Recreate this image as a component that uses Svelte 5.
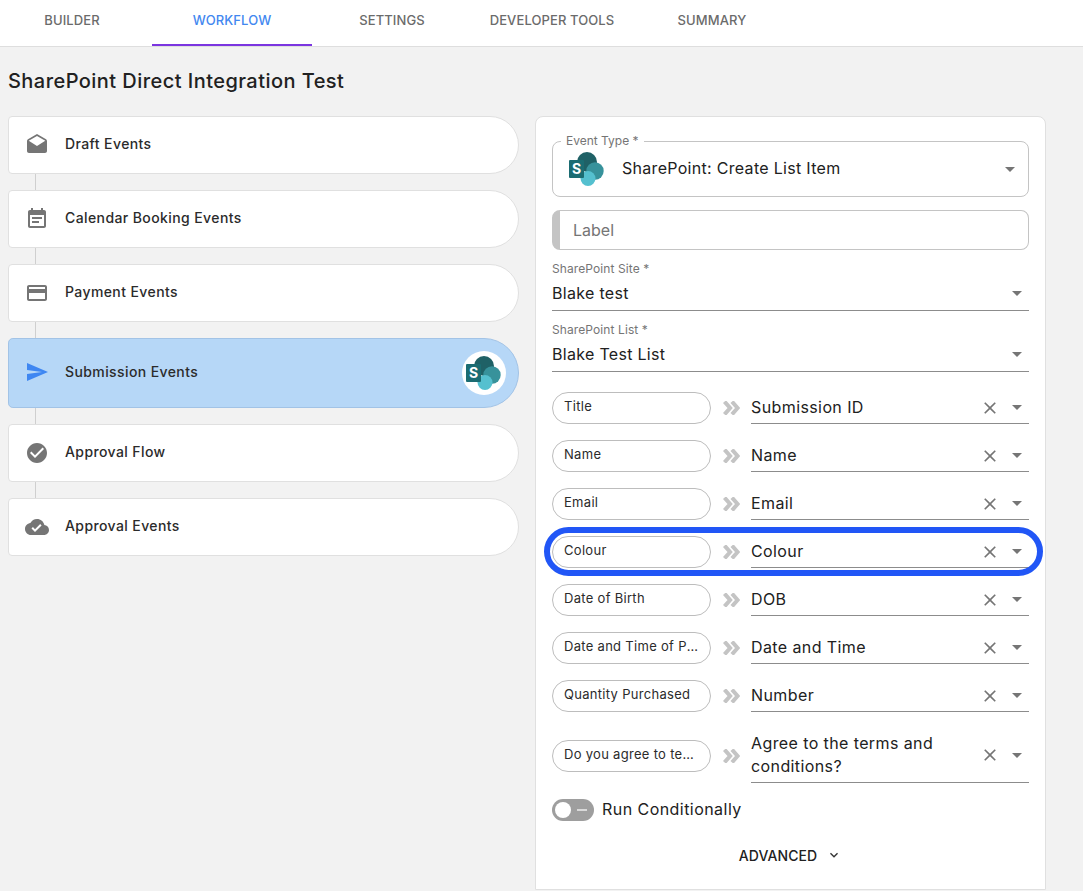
<script>
  const tabs = ['BUILDER', 'WORKFLOW', 'SETTINGS', 'DEVELOPER TOOLS', 'SUMMARY'];
  const before = [
    { name: 'Draft Events', d: 'M21.99 8c0-.72-.37-1.35-.94-1.7L12 1 2.95 6.3C2.38 6.65 2 7.28 2 8v10c0 1.1.9 2 2 2h16c1.1 0 2-.9 2-2l-.01-10zM12 13L3.74 7.84 12 3l8.26 4.84L12 13z' },
    { name: 'Calendar Booking Events', d: 'M17 10H7v2h10v-2zm2-7h-1V1h-2v2H8V1H6v2H5c-1.11 0-1.99.9-1.99 2L3 19c0 1.1.89 2 2 2h14c1.1 0 2-.9 2-2V5c0-1.1-.9-2-2-2zm0 16H5V8h14v11zm-5-5H7v2h7v-2z' },
    { name: 'Payment Events', d: 'M20 4H4c-1.11 0-1.99.89-1.99 2L2 18c0 1.11.89 2 2 2h16c1.11 0 2-.89 2-2V6c0-1.11-.89-2-2-2zm0 14H4v-6h16v6zm0-10H4V6h16v2z' }
  ];
  const after = [
    { name: 'Approval Flow', d: 'M12 2C6.48 2 2 6.48 2 12s4.48 10 10 10 10-4.48 10-10S17.52 2 12 2zm-2 15l-5-5 1.41-1.41L10 14.17l7.59-7.59L19 8l-9 9z' },
    { name: 'Approval Events', d: 'M19.35 10.04C18.67 6.59 15.64 4 12 4 9.11 4 6.6 5.64 5.35 8.04 2.34 8.36 0 10.91 0 14c0 3.31 2.69 6 6 6h13c2.76 0 5-2.24 5-5 0-2.64-2.05-4.78-4.65-4.96zM10 17l-3.5-3.5 1.41-1.41L10 14.17 15.18 9l1.41 1.41L10 17z' }
  ];
  const mappings = [
    { from: 'Title', to: 'Submission ID' },
    { from: 'Name', to: 'Name' },
    { from: 'Email', to: 'Email' },
    { from: 'Colour', to: 'Colour', ring: true },
    { from: 'Date of Birth', to: 'DOB' },
    { from: 'Date and Time of Purchase', to: 'Date and Time' },
    { from: 'Quantity Purchased', to: 'Number' },
    { from: 'Do you agree to terms?', to: 'Agree to the terms and conditions?', tall: true }
  ];
</script>

{#snippet logo(cls)}
  <svg class={cls} viewBox="0 0 36 36" aria-hidden="true">
    <circle cx="19" cy="10" r="10" fill="#1f6166" />
    <circle cx="27" cy="19" r="8.7" fill="#37929b" />
    <circle cx="20" cy="26.5" r="7.5" fill="#55c0cf" />
    <rect x="1" y="8" width="15" height="18" rx="1" fill="#1b6c72" />
    <text x="8.5" y="22" text-anchor="middle" class="logo-s">S</text>
  </svg>
{/snippet}

{#snippet card(item)}
  <div class="card">
    <svg class="card-icon" viewBox="0 0 24 24" aria-hidden="true"><path d={item.d} /></svg>
    <span class="card-name">{item.name}</span>
  </div>
{/snippet}

{#snippet caret()}
  <svg class="caret" viewBox="0 0 10 5" aria-hidden="true"><path d="M0 0h10L5 5z" /></svg>
{/snippet}

<div class="page">
  <nav class="tabs">
    {#each tabs as tab}
      <div class="tab" class:active={tab === 'WORKFLOW'}>{tab}</div>
    {/each}
  </nav>

  <h1>SharePoint Direct Integration Test</h1>

  <div class="columns">
    <div class="events">
      {#each before as item}
        {@render card(item)}
        <div class="link"></div>
      {/each}
      <div class="card selected">
        <svg class="card-icon send" viewBox="0 0 24 24" aria-hidden="true"><path d="M2.01 21L23 12 2.01 3 2 10l15 2-15 2z" /></svg>
        <span class="card-name">Submission Events</span>
        <div class="logo-badge">{@render logo('badge-logo')}</div>
      </div>
      {#each after as item}
        <div class="link"></div>
        {@render card(item)}
      {/each}
    </div>

    <section class="panel">
      <div class="event-type">
        <span class="legend">Event Type *</span>
        {@render logo('type-logo')}
        <span class="type-value">SharePoint: Create List Item</span>
        {@render caret()}
      </div>

      <div class="label-field"><span>Label</span></div>

      <div class="select">
        <div class="select-label">SharePoint Site *</div>
        <div class="select-value"><span>Blake test</span>{@render caret()}</div>
      </div>
      <div class="select">
        <div class="select-label">SharePoint List *</div>
        <div class="select-value"><span>Blake Test List</span>{@render caret()}</div>
      </div>

      <div class="rows">
        {#each mappings as m}
          <div class="row">
            <div class="pill"><span>{m.from}</span></div>
            <svg class="arrows" viewBox="0 0 17 14" aria-hidden="true">
              <path d="M1.5 .6l5.6 6.4-5.6 6.4M9 .6l5.6 6.4L9 13.4" />
            </svg>
            <div class="target" class:tall={m.tall}>
              <span class="target-text">{m.to}</span>
              <svg class="clear" viewBox="0 0 24 24" aria-hidden="true"><path d="M19 6.41L17.59 5 12 10.59 6.41 5 5 6.41 10.59 12 5 17.59 6.41 19 12 13.41 17.59 19 19 17.59 13.41 12z" /></svg>
              {@render caret()}
            </div>
            {#if m.ring}<div class="ring"></div>{/if}
          </div>
        {/each}
      </div>

      <div class="conditional">
        <div class="toggle"><span class="knob"></span><span class="dash"></span></div>
        <span class="run-label">Run Conditionally</span>
      </div>

      <div class="advanced">
        <span>ADVANCED</span>
        <svg viewBox="0 0 24 24" aria-hidden="true"><path d="M7.41 8.59L12 13.17l4.59-4.58L18 10l-6 6-6-6z" /></svg>
      </div>
    </section>
  </div>
</div>

<style>
  :global(body) {
    margin: 0;
    background: #f2f2f2;
    overflow: hidden;
  }
  .page {
    height: 891px;
    overflow: hidden;
    font-family: Inter, 'Open Sans', sans-serif;
    color: #212121;
    background: #f2f2f2;
  }
  .tabs {
    display: flex;
    height: 46px;
    background: #fff;
    border-bottom: 1px solid #dedede;
  }
  .tab {
    flex: 0 0 160px;
    box-sizing: border-box;
    height: 46px;
    line-height: 40px;
    text-align: center;
    font-size: 13px;
    font-weight: 500;
    letter-spacing: 0.1px;
    color: #6b6b6b;
  }
  .tab:first-child {
    margin-left: -8px;
  }
  .tab.active {
    color: #4287f0;
    border-bottom: 2px solid #7b35e0;
  }
  h1 {
    margin: 0;
    padding: 21px 8px 0;
    height: 48px;
    line-height: 27px;
    font-size: 20px;
    font-weight: 500;
    letter-spacing: 0.45px;
    color: #212121;
  }
  .columns {
    display: flex;
    gap: 16px;
    padding: 0 37px 0 8px;
    align-items: flex-start;
  }
  .events {
    flex: 0 0 511px;
    display: flex;
    flex-direction: column;
  }
  .card {
    box-sizing: border-box;
    display: flex;
    align-items: center;
    height: 58px;
    padding-left: 16px;
    background: #fff;
    border: 1px solid #e0e0e0;
    border-radius: 5px 36px 36px 5px;
    font-size: 14px;
    font-weight: 500;
    letter-spacing: 0.4px;
    color: #2b2b2b;
  }
  .card-name {
    margin-bottom: 3px;
  }
  .card.selected {
    height: 70px;
    background: #b6d7f7;
    border-color: #a2c3e6;
    padding-right: 12px;
  }
  .card-icon {
    flex: none;
    width: 24px;
    height: 24px;
    margin-right: 16px;
    fill: #757575;
  }
  .send {
    fill: #3f87f2;
    margin-bottom: 2px;
  }
  .link {
    width: 1px;
    height: 16px;
    margin-left: 27px;
    background: #cfcfcf;
  }
  .logo-badge {
    margin-left: auto;
    width: 44px;
    height: 44px;
    box-sizing: border-box;
    padding: 5px 5px 3px 3px;
    border-radius: 50%;
    background: #fff;
  }
  .badge-logo {
    display: block;
    width: 36px;
    height: 36px;
  }
  .logo-s {
    fill: #fff;
    font-family: Inter, sans-serif;
    font-size: 14px;
    font-weight: 700;
    letter-spacing: 0;
  }
  .panel {
    flex: 0 0 511px;
    min-width: 0;
    box-sizing: border-box;
    height: 774px;
    padding: 24px 16px 0;
    background: #fff;
    border: 1px solid #e0e0e0;
    border-radius: 8px 8px 0 0;
  }
  .event-type {
    position: relative;
    box-sizing: border-box;
    display: flex;
    align-items: center;
    height: 56px;
    padding: 0 13px 0 15px;
    border: 1px solid #c4c4c4;
    border-radius: 8px;
  }
  .legend {
    position: absolute;
    left: 8px;
    top: -8px;
    padding: 0 5px;
    background: #fff;
    font-size: 12px;
    line-height: 14px;
    color: #757575;
  }
  .type-logo {
    flex: none;
    width: 36px;
    height: 36px;
    margin: 2px 18px 0 0;
  }
  .type-value {
    flex: 1;
    margin-bottom: 2px;
    font-size: 16px;
    letter-spacing: 0.3px;
  }
  .caret {
    flex: none;
    width: 10px;
    height: 5px;
    fill: #757575;
  }
  .label-field {
    box-sizing: border-box;
    height: 40px;
    margin-top: 13px;
    padding-left: 13px;
    border: 1px solid #c4c4c4;
    border-left: 8px solid #c4c4c4;
    border-radius: 8px;
    line-height: 38px;
    font-size: 16px;
    color: #757575;
  }
  .select {
    margin-top: 11px;
  }
  .select-label {
    height: 16px;
    line-height: 16px;
    font-size: 12px;
    letter-spacing: 0.1px;
    color: #757575;
  }
  .select-value {
    box-sizing: border-box;
    display: flex;
    align-items: center;
    justify-content: space-between;
    height: 34px;
    padding: 0 7px 0 0;
    border-bottom: 1px solid #8c8c8c;
    font-size: 16px;
    letter-spacing: 0.3px;
  }
  .select-value span {
    margin-bottom: 2px;
  }
  .rows {
    display: flex;
    flex-direction: column;
    gap: 16px;
    margin-top: 20px;
  }
  .row {
    position: relative;
    display: flex;
    align-items: center;
  }
  .pill {
    box-sizing: border-box;
    flex: 0 0 159px;
    min-width: 0;
    height: 32px;
    padding: 0 11px;
    border: 1px solid #bdbdbd;
    border-radius: 16px;
    font-size: 13px;
    letter-spacing: 0.3px;
    line-height: 27px;
    color: #2b2b2b;
  }
  .pill span {
    display: block;
    overflow: hidden;
    white-space: nowrap;
    text-overflow: ellipsis;
  }
  .arrows {
    flex: none;
    width: 17px;
    height: 14px;
    margin: 0 11px 0 12px;
    fill: none;
    stroke: #c4c4c4;
    stroke-width: 4;
  }
  .target {
    box-sizing: border-box;
    flex: 0 0 278px;
    display: flex;
    align-items: center;
    min-height: 32px;
    padding-right: 7px;
    border-bottom: 1px solid #8c8c8c;
    font-size: 16px;
    letter-spacing: 0.4px;
  }
  .target.tall {
    min-height: 55px;
    line-height: 23px;
  }
  .target-text {
    flex: 0 0 212px;
    margin-bottom: 2px;
  }
  .tall .target-text {
    margin-bottom: 0;
  }
  .clear {
    flex: none;
    width: 20px;
    height: 20px;
    margin: 0 12px 0 17px;
    fill: #757575;
  }
  .ring {
    position: absolute;
    left: -8px;
    right: -14px;
    top: -9px;
    bottom: -8px;
    box-sizing: border-box;
    border: 6px solid #2156f6;
    border-radius: 25px;
    pointer-events: none;
  }
  .conditional {
    display: flex;
    align-items: center;
    gap: 8px;
    margin-top: 16px;
    font-size: 16px;
    letter-spacing: 0.45px;
  }
  .run-label {
    margin-bottom: 2px;
  }
  .toggle {
    position: relative;
    width: 42px;
    height: 22px;
    border-radius: 11px;
    background: #9e9e9e;
  }
  .knob {
    position: absolute;
    left: 3px;
    top: 3px;
    width: 16px;
    height: 16px;
    border-radius: 50%;
    background: #fff;
  }
  .dash {
    position: absolute;
    left: 25px;
    top: 10px;
    width: 10px;
    height: 2px;
    background: #d9d9d9;
  }
  .advanced {
    display: flex;
    align-items: center;
    justify-content: center;
    gap: 9px;
    margin-top: 22px;
    height: 24px;
    font-size: 14px;
    font-weight: 500;
    letter-spacing: 0.1px;
  }
  .advanced svg {
    width: 16px;
    height: 16px;
    fill: #333;
  }
</style>
